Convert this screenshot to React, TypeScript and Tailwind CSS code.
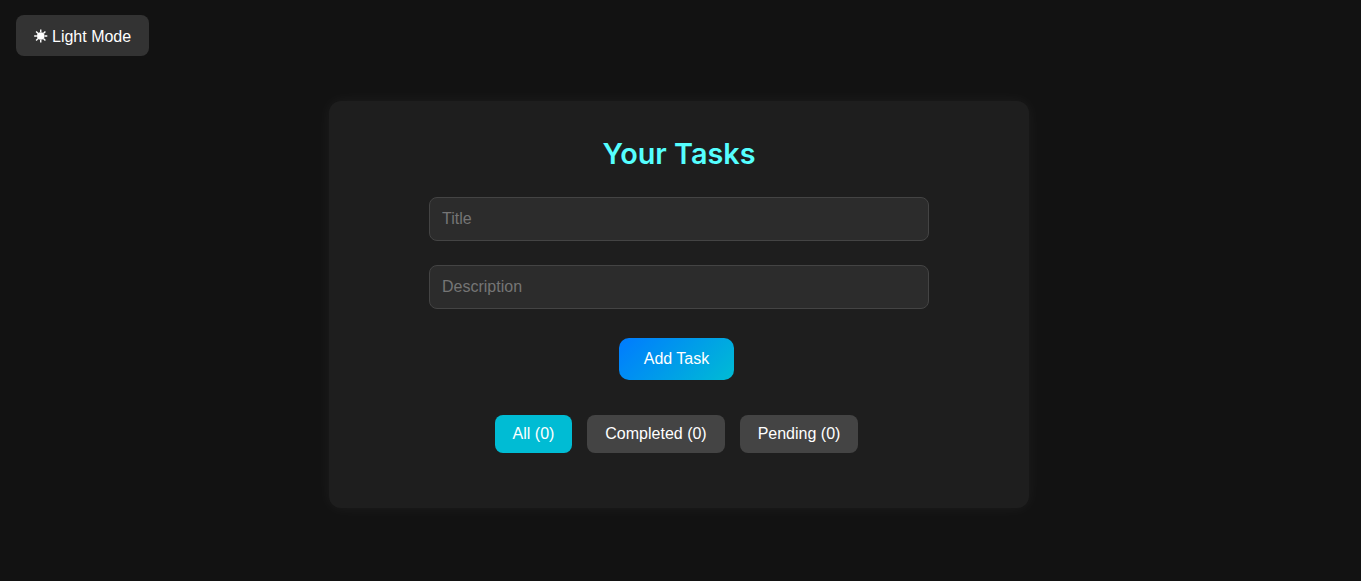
function SunIcon() {
  return (
    <svg aria-hidden="true" viewBox="0 0 14 14" className="mr-1 mb-px h-3.5 w-3.5 shrink-0">
      <circle cx="6.75" cy="7" r="3.75" fill="currentColor" />
      <path
        d="M6.75.5v2.5M6.75 11v2.5M.2 7h2.7M10.6 7h2.7M2.1 2.4l2 2M9.4 9.6l2 2M2.1 11.6l2-2M9.4 4.4l2-2"
        stroke="currentColor"
        strokeWidth="1.4"
        fill="none"
      />
    </svg>
  );
}

export default function App() {
  return (
    <div className="flex h-[581px] w-full flex-col bg-[#121212] font-['Liberation_Sans',sans-serif] text-base text-white">
      <header className="flex pt-[15px] pl-4">
        <button className="flex h-[41px] w-[133px] items-center rounded-lg bg-[#333] pt-0.5 pl-[18px] whitespace-nowrap">
          <SunIcon />
          Light Mode
        </button>
      </header>
      <main className="mt-[45px] ml-[329px] flex h-[407px] w-[700px] flex-col items-center rounded-xl bg-[#1e1e1e] shadow-[0_0_15px_rgba(255,255,255,0.05)]">
        <h1 className="mt-[34px] h-[38px] font-[Inter,sans-serif] text-[28.8px] leading-[38px] font-semibold text-[#55ffff]">
          Your Tasks
        </h1>
        <input aria-label="Title" placeholder="Title" className="mt-6 h-11 w-[500px] rounded-lg border border-[#444] bg-[#2c2c2c] px-3 placeholder:text-[#757575]" />
        <input aria-label="Description" placeholder="Description" className="mt-6 h-11 w-[500px] rounded-lg border border-[#444] bg-[#2c2c2c] px-3 placeholder:text-[#757575]" />
        <button className="mt-[29px] mr-[5px] h-[42px] w-[115px] rounded-[10px] bg-[linear-gradient(135deg,#007bff,#00bcd4)]">
          Add Task
        </button>
        <div className="mt-[35px] mr-[5px] flex gap-[15px]">
          <button className="h-[38px] w-[77px] rounded-lg bg-[#00bcd4]">All (0)</button>
          <button className="h-[38px] w-[138px] rounded-lg bg-[#444]">Completed (0)</button>
          <button className="h-[38px] w-[118px] rounded-lg bg-[#444]">Pending (0)</button>
        </div>
      </main>
    </div>
  );
}
